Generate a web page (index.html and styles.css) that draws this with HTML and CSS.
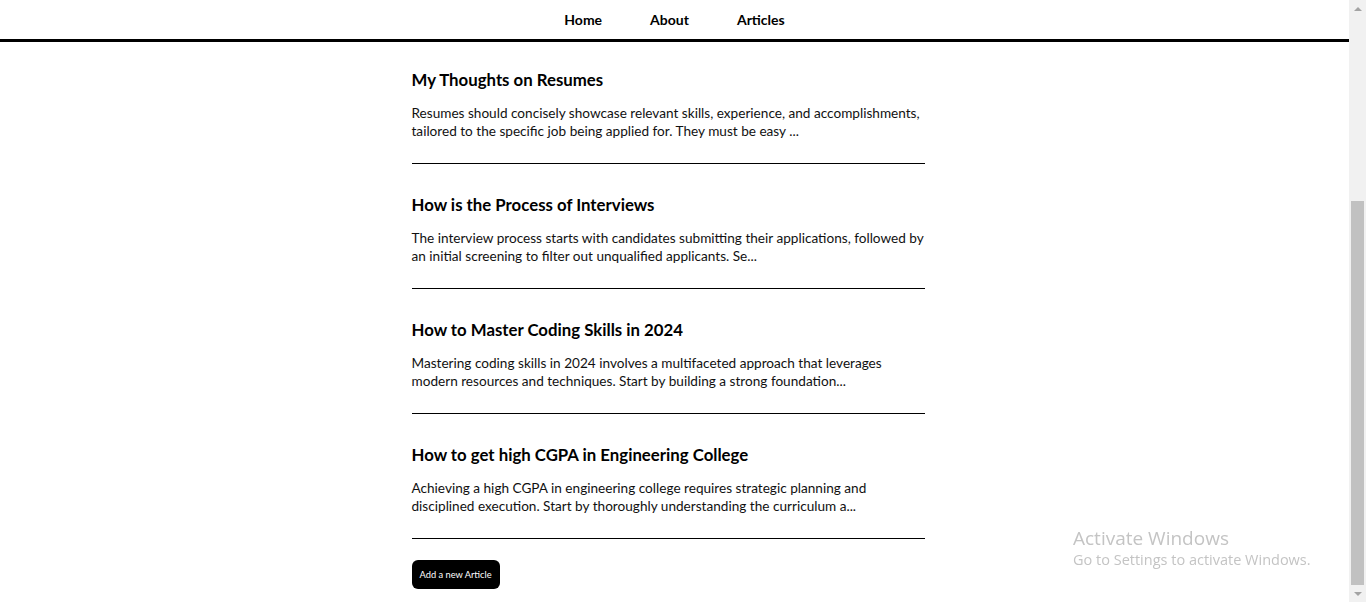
FILE: index.html
```html
<!DOCTYPE html>
<html lang="en">
<head>
<meta charset="utf-8">
<title>Articles</title>
<link rel="stylesheet" href="styles.css">
</head>
<body>
<nav class="nav">
  <a class="nav-link" href="#">Home</a>
  <a class="nav-link" href="#">About</a>
  <a class="nav-link" href="#">Articles</a>
</nav>
<main class="list">
  <article class="article">
    <h3 class="article-title">My Thoughts on Resumes</h3>
    <p class="article-text">Resumes should concisely showcase relevant skills, experience, and accomplishments, tailored to the specific job being applied for. They must be easy ...</p>
  </article>
  <article class="article">
    <h3 class="article-title">How is the Process of Interviews</h3>
    <p class="article-text">The interview process starts with candidates submitting their applications, followed by an initial screening to filter out unqualified applicants. Se...</p>
  </article>
  <article class="article">
    <h3 class="article-title">How to Master Coding Skills in 2024</h3>
    <p class="article-text">Mastering coding skills in 2024 involves a multifaceted approach that leverages modern resources and techniques. Start by building a strong foundation...</p>
  </article>
  <article class="article">
    <h3 class="article-title">How to get high CGPA in Engineering College</h3>
    <p class="article-text">Achieving a high CGPA in engineering college requires strategic planning and disciplined execution. Start by thoroughly understanding the curriculum a...</p>
  </article>
  <button class="add-btn" type="button">Add a new Article</button>
</main>
<div class="scrollbar" aria-hidden="true">
  <span class="sb-arrow sb-up"></span>
  <span class="sb-thumb"></span>
  <span class="sb-arrow sb-down"></span>
</div>
<div class="watermark">
  <div class="wm-title">Activate Windows</div>
  <div class="wm-sub">Go to Settings to activate Windows.</div>
</div>
</body>
</html>
```
FILE: styles.css
```css
body {
  margin: 0 17px 0 0;
  font-family: "Lato", "Open Sans", sans-serif;
  color: #000;
  background: #fff;
}
.nav {
  height: 39px;
  border-bottom: 3px solid #000;
  display: flex;
  justify-content: center;
  align-items: center;
  gap: 48px;
}
.nav-link {
  color: #000;
  text-decoration: none;
  font-weight: 700;
  font-size: 14px;
}
.list {
  width: 513px;
  margin-left: calc(50% - 263px);
  padding-top: 27px;
  display: flex;
  flex-direction: column;
}
.article {
  border-bottom: 1px solid #000;
  padding-bottom: 23px;
}
.article + .article {
  margin-top: 30px;
}
.article-title {
  margin: 0;
  font-size: 16.8px;
  line-height: 22px;
  font-weight: 700;
}
.article-text {
  margin: 13px 0 0;
  font-size: 13.6px;
  line-height: 18px;
  color: #111;
}
.add-btn {
  align-self: flex-start;
  margin-top: 21px;
  height: 29px;
  padding: 0 8px;
  background: #000;
  color: #fff;
  border: none;
  border-radius: 6px;
  font-family: inherit;
  font-size: 9.3px;
}
.scrollbar {
  position: fixed;
  top: 0;
  right: 0;
  bottom: 0;
  width: 17px;
  background: #f1f1f1;
  display: flex;
  flex-direction: column;
  align-items: center;
}
.sb-arrow {
  height: 17px;
  width: 17px;
  display: flex;
  align-items: center;
  justify-content: center;
}
.sb-arrow::before {
  content: "";
  border-left: 4px solid transparent;
  border-right: 4px solid transparent;
}
.sb-up::before {
  border-bottom: 4px solid #a3a3a3;
}
.sb-down::before {
  border-top: 4px solid #a3a3a3;
}
.sb-thumb {
  margin-top: 184px;
  width: 13px;
  flex: 1;
  background: #c1c1c1;
}
.watermark {
  position: fixed;
  left: 1073px;
  top: 526px;
  color: #c4c4c4;
  font-family: "Open Sans", sans-serif;
}
.wm-title {
  font-size: 19px;
  line-height: 24px;
}
.wm-sub {
  font-size: 14.5px;
  line-height: 20px;
}
```
